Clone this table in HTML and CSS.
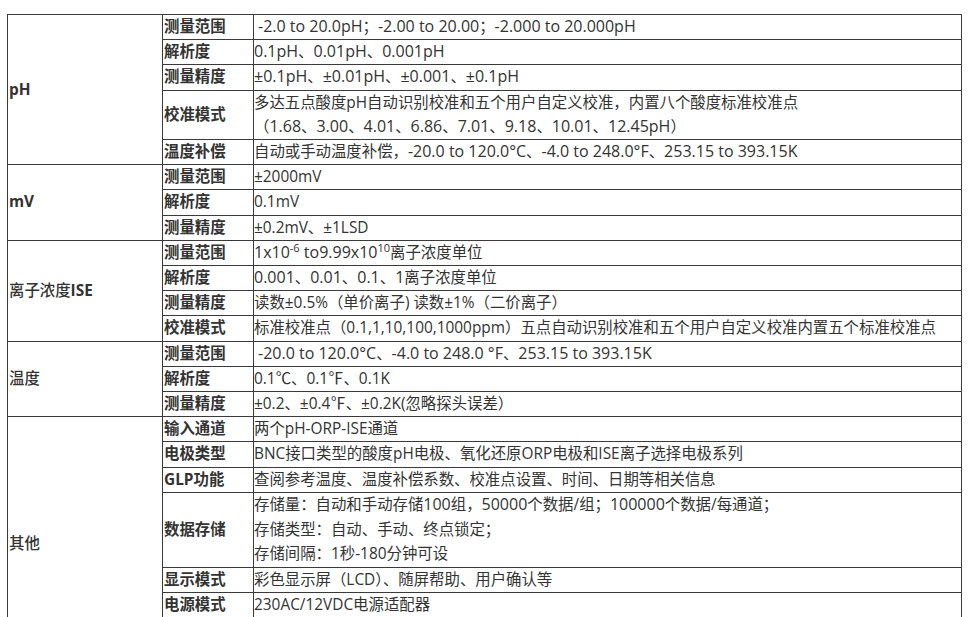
FILE: index.html
```html
<!DOCTYPE html>
<html lang="zh-CN">
<head>
<meta charset="utf-8">
<title>技术参数</title>
<link rel="stylesheet" href="styles.css">
</head>
<body>
<div class="page">
<table class="spec">
  <colgroup>
    <col class="c1"><col class="c2"><col class="c3">
  </colgroup>
  <tbody>
    <tr>
      <td class="group" rowspan="5"><b>pH</b></td>
      <td class="label">测量范围</td>
      <td>&nbsp;<span class="num">-2.0 to 20.0pH</span>；<span class="num">-2.00 to 20.00</span>；<span class="num">-2.000 to 20.000pH</span></td>
    </tr>
    <tr><td class="label">解析度</td><td><span class="num">0.1pH</span>、<span class="num">0.01pH</span>、<span class="num">0.001pH</span></td></tr>
    <tr><td class="label">测量精度</td><td><span class="num">±0.1pH</span>、<span class="num">±0.01pH</span>、<span class="num">±0.001</span>、<span class="num">±0.1pH</span></td></tr>
    <tr><td class="label">校准模式</td><td>多达五点酸度pH自动识别校准和五个用户自定义校准，内置八个酸度标准校准点<br>（<span class="num">1.68</span>、<span class="num">3.00</span>、<span class="num">4.01</span>、<span class="num">6.86</span>、<span class="num">7.01</span>、<span class="num">9.18</span>、<span class="num">10.01</span>、<span class="num">12.45pH</span>）</td></tr>
    <tr><td class="label">温度补偿</td><td>自动或手动温度补偿，<span class="num">-20.0 to 120.0°C</span>、<span class="num">-4.0 to 248.0°F</span>、<span class="num">253.15 to 393.15K</span></td></tr>

    <tr>
      <td class="group" rowspan="3"><b>mV</b></td>
      <td class="label">测量范围</td>
      <td>±2000mV</td>
    </tr>
    <tr><td class="label">解析度</td><td>0.1mV</td></tr>
    <tr><td class="label">测量精度</td><td>±0.2mV、±1LSD</td></tr>

    <tr>
      <td class="group" rowspan="4">离子浓度<b>ISE</b></td>
      <td class="label">测量范围</td>
      <td><span class="num">1x10<sup>-6</sup> to9.99x10<sup>10</sup></span>离子浓度单位</td>
    </tr>
    <tr><td class="label">解析度</td><td><span class="num">0.001</span>、<span class="num">0.01</span>、<span class="num">0.1</span>、<span class="num">1</span>离子浓度单位</td></tr>
    <tr><td class="label">测量精度</td><td>读数±0.5%（单价离子) 读数±1%（二价离子）</td></tr>
    <tr><td class="label">校准模式</td><td>标准校准点（0.1,1,10,100,1000ppm）五点自动识别校准和五个用户自定义校准内置五个标准校准点</td></tr>

    <tr>
      <td class="group" rowspan="3">温度</td>
      <td class="label">测量范围</td>
      <td>&nbsp;<span class="num">-20.0 to 120.0°C</span>、<span class="num">-4.0 to 248.0 °F</span>、<span class="num">253.15 to 393.15K</span></td>
    </tr>
    <tr><td class="label">解析度</td><td>0.1℃、0.1℉、0.1K</td></tr>
    <tr><td class="label">测量精度</td><td>±0.2、±0.4℉、±0.2K(忽略探头误差）</td></tr>

    <tr>
      <td class="group group-cut" rowspan="6">其他</td>
      <td class="label">输入通道</td>
      <td>两个pH-ORP-ISE通道</td>
    </tr>
    <tr><td class="label">电极类型</td><td>BNC接口类型的酸度pH电极、氧化还原ORP电极和ISE离子选择电极系列</td></tr>
    <tr><td class="label">GLP功能</td><td>查阅参考温度、温度补偿系数、校准点设置、时间、日期等相关信息</td></tr>
    <tr class="tall"><td class="label">数据存储</td><td>存储量：自动和手动存储<span class="num">100</span>组，<span class="num">50000</span>个数据/组；<span class="num">100000</span>个数据/每通道；<br>存储类型：自动、手动、终点锁定；<br>存储间隔：1秒-180分钟可设</td></tr>
    <tr><td class="label">显示模式</td><td>彩色显示屏（LCD）、随屏帮助、用户确认等</td></tr>
    <tr><td class="label">电源模式</td><td>230AC/12VDC电源适配器</td></tr>
  </tbody>
</table>
</div>
</body>
</html>
```

FILE: styles.css
```css
html, body {
  margin: 0;
  padding: 0;
  background: #ffffff;
}

.page {
  padding: 14px 0 0 7px;
}

.spec {
  border-collapse: collapse;
  width: 954px;
  table-layout: fixed;
  font-family: "Open Sans", "Noto Sans CJK SC", sans-serif;
  font-size: 15.4px;
  color: #333333;
}

.spec col.c1 { width: 155px; }
.spec col.c2 { width: 91px; }
.spec col.c3 { width: 708px; }

.spec td {
  border: 1px solid #3a3a3a;
  padding: 0 1px 0 0;
  line-height: 24.2px;
  vertical-align: middle;
  white-space: nowrap;
  overflow: hidden;
}

.spec tr.tall td {
  line-height: 24.7px;
}

.spec td.group {
  padding-left: 1px;
  font-weight: 500;
}

.spec td.group b {
  font-weight: 700;
}

.spec td.group-cut {
  vertical-align: top;
  padding-top: 115px;
}

.spec td.label {
  padding-left: 1px;
  font-weight: 700;
}

.spec .num {
  font-size: 16px;
  line-height: 1;
}

.spec sup {
  font-size: 11px;
  line-height: 0;
  vertical-align: 6px;
}
```
